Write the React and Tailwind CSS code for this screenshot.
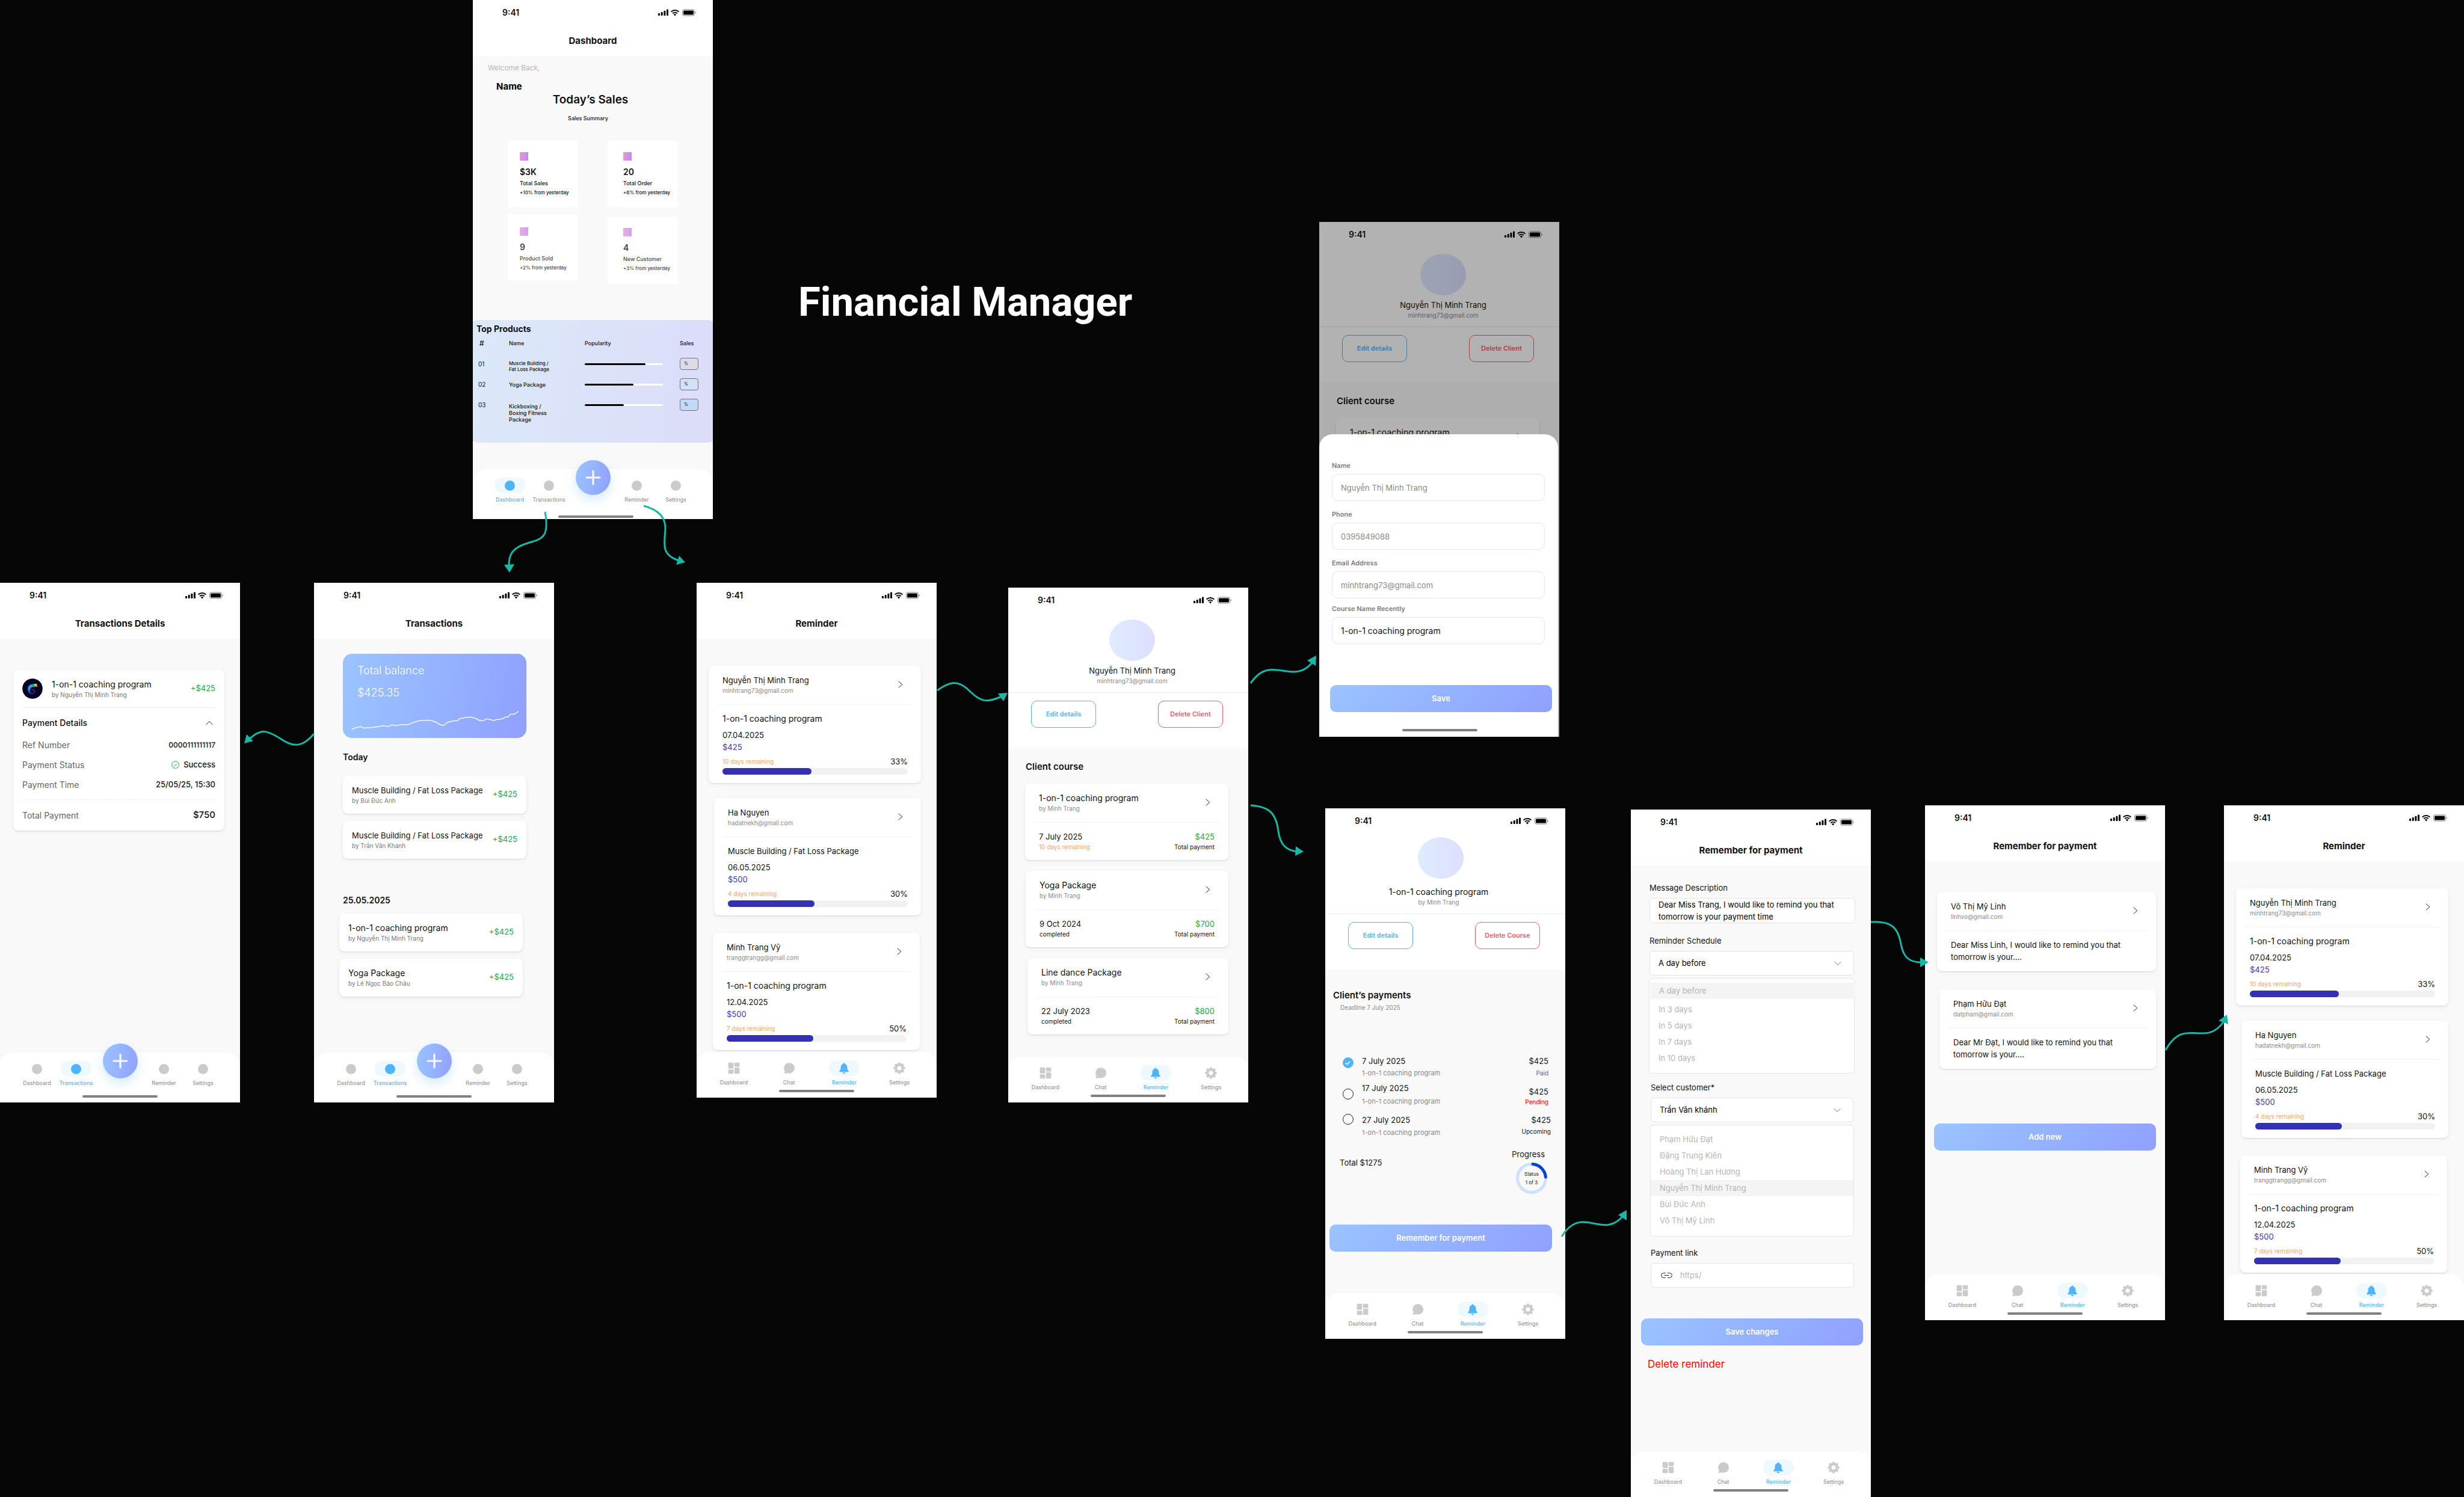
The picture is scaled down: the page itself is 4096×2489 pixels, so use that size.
import React, { useId } from "react";

/* ---------- icons ---------- */

function StatusIcons() {
  return (
    <svg width="64" height="12" viewBox="0 0 64 12" aria-hidden="true">
      <rect x="0" y="7" width="3" height="4" rx="1" />
      <rect x="4.7" y="5" width="3" height="6" rx="1" />
      <rect x="9.4" y="2.7" width="3" height="8.3" rx="1" />
      <rect x="14" y="0.5" width="3" height="10.5" rx="1" />
      <g fill="none" stroke="#000" strokeWidth="2">
        <path d="M21.6 4.6a9.2 9.2 0 0 1 12.8 0" />
        <path d="M24.2 7.3a5.5 5.5 0 0 1 7.6 0" />
      </g>
      <path d="M28 11.4l-2.2-2.3a3.2 3.2 0 0 1 4.4 0z" />
      <rect x="40.5" y="0.9" width="20" height="10.2" rx="3" fill="none" stroke="#000" strokeOpacity=".5" />
      <rect x="42" y="2.4" width="17" height="7.2" rx="1.6" />
      <path d="M61.8 4.2c1.5.6 1.5 3 0 3.6z" fillOpacity=".6" />
    </svg>
  );
}

function GridIcon() {
  return (
    <svg width="20" height="20" viewBox="0 0 20 20" fill="currentColor" aria-hidden="true">
      <rect x="0.6" y="0.7" width="8.8" height="10" rx="1.4" />
      <rect x="0.6" y="12.2" width="8.8" height="7" rx="1.4" />
      <rect x="10.8" y="0.7" width="8.6" height="7" rx="1.4" />
      <rect x="10.8" y="9.1" width="8.6" height="10.1" rx="1.4" />
    </svg>
  );
}

function ChatIcon() {
  return (
    <svg width="20" height="20" viewBox="0 0 20 20" fill="currentColor" aria-hidden="true">
      <path d="M10.3 1.3a8.7 8.7 0 1 1-3.2 16.8c-1.4.7-3.3 1-4.9.7-.7-.1-.9-.7-.5-1.2.6-.8.9-1.9.8-3A8.7 8.7 0 0 1 10.3 1.3z" />
    </svg>
  );
}

function BellIcon() {
  return (
    <svg width="20" height="20" viewBox="0 0 20 20" fill="currentColor" aria-hidden="true">
      <path d="M10 1.6c1 0 1.5.6 1.6 1.3 2.3.7 3.7 2.6 3.8 5l.2 3.3c.1 1 .5 1.7 1.2 2.5.6.6 1 1 1 1.7 0 .5-.4.8-.9.8H3.1c-.5 0-.9-.3-.9-.8 0-.7.4-1.100 1-1.7.7-.8 1.100-1.500 1.2-2.500l.2-3.300c.1-2.400 1.500-4.300 3.800-5 .1-.7.6-1.300 1.800-1.300z" />
      <path d="M7 17.2h6c-.4 1.2-1.6 1.8-3 1.8s-2.6-.6-3-1.8z" />
    </svg>
  );
}

function GearIcon() {
  return (
    <svg width="20" height="20" viewBox="0 0 20 20" fill="currentColor" aria-hidden="true">
      {[0, 45, 90, 135].map((a) => (
        <rect key={a} x="7.7" y="0.4" width="4.6" height="19.2" rx="1.5" transform={`rotate(${a} 10 10)`} />
      ))}
      <circle cx="10" cy="10" r="7.3" />
      <circle cx="10" cy="10" r="3.5" fill="#fff" />
    </svg>
  );
}

function Dot() {
  return <span className="size-[17px] rounded-full bg-current" />;
}

function ChevronRight() {
  return (
    <svg width="8" height="12" viewBox="0 0 8 12" fill="none" stroke="#222" strokeLinecap="round" aria-hidden="true">
      <path d="M1 1 6.8 6 1 11" />
    </svg>
  );
}

function ChevronDown() {
  return (
    <svg width="12" height="8" viewBox="0 0 12 8" fill="none" stroke="#777" strokeLinecap="round" aria-hidden="true">
      <path d="M.8 1.5 6 6.200l5.200-4.700" />
    </svg>
  );
}

function ChevronUp() {
  return (
    <svg width="12" height="8" viewBox="0 0 12 8" fill="none" stroke="#222" strokeLinecap="round" aria-hidden="true">
      <path d="M.8 6.700 6 1.300l5.200 5.400" />
    </svg>
  );
}

function ChameleonLogo() {
  return (
    <svg width="34" height="34" viewBox="0 0 34 34" aria-hidden="true">
      <defs>
        <linearGradient id="chameleon-body" x1="0" y1="0" x2="0" y2="1">
          <stop offset="0" stopColor="#27b7c9" />
          <stop offset=".45" stopColor="#159fe0" />
          <stop offset=".75" stopColor="#1f5fe0" />
          <stop offset="1" stopColor="#5a2fb0" />
        </linearGradient>
      </defs>
      <circle cx="17" cy="17" r="16.8" fill="#070322" />
      <path d="M19.5 10c-5-.6-9.600 2.400-10 7.700-.3 4.500 3 7.800 6.700 7.500 3-.2 4.800-2.300 4.500-4.500-.3-2-2.500-2.800-3.700-1.600-.5.6-.2 1.400.5 1.500" fill="none" stroke="#47209c" strokeWidth="1.5" />
      <path d="M20 9.500c-6-.6-10.800 2.800-10.800 8.200 0 3.700 2.400 6.600 5.600 7.400-2-3.200-2.400-6.800-.4-9.200 1.400-1.700 3.600-2 5.600-2.200z" fill="url(#chameleon-body)" />
      <path d="M15 11.500c1.500-1.600 3.500-2.500 6-2.500l2.500 3.800-3.500 2z" fill="#17a88b" />
      <path d="M19 9.500 24 8.700l.8 5.500-3-1.200z" fill="#f2cf4a" />
      <path d="M21.800 12.300l3 1.900-.5-2.800z" fill="#f08a3c" />
    </svg>
  );
}

/* ---------- shared parts ---------- */

function StatusBar() {
  return (
    <div className="flex h-[42px] shrink-0 items-center justify-between pl-[49px] pr-[27px]">
      <span className="text-[14px] font-semibold leading-[20px]">9:41</span>
      <StatusIcons />
    </div>
  );
}

function TitleHeader({ title }) {
  return (
    <header className="bg-white">
      <StatusBar />
      <h2 className="flex h-[51px] items-center justify-center pt-[2px] text-[15px] font-bold">{title}</h2>
    </header>
  );
}

function HomeBar({ className }) {
  return <div className={`h-1 w-[125px] self-center rounded-full bg-[#808080] ${className}`} />;
}

function NavItem({ icon, label, active, className }) {
  return (
    <button type="button" className={`flex flex-col items-center ${active ? "text-[#4fb5f9]" : "text-[#cbcbcb]"} ${className}`}>
      <span className={`flex h-[26px] w-[51px] items-center justify-center rounded-full ${active ? "bg-[#edf8ff]" : ""}`}>{icon}</span>
      <span className={`mt-[5px] text-[9px] leading-[12px] ${active ? "font-medium" : "text-[#8a8a8a]"}`}>{label}</span>
    </button>
  );
}

function IconNav() {
  return (
    <nav className="relative mt-auto flex h-[76px] shrink-0 flex-col rounded-t-[22px] bg-white pt-[14px]">
      <div className="flex px-4">
        <NavItem className="flex-1" icon={<GridIcon />} label="Dashboard" />
        <NavItem className="flex-1" icon={<ChatIcon />} label="Chat" />
        <NavItem className="flex-1" icon={<BellIcon />} label="Reminder" active />
        <NavItem className="flex-1" icon={<GearIcon />} label="Settings" />
      </div>
      <HomeBar className="mt-[6px]" />
    </nav>
  );
}

function FabNav({ active, barClass }) {
  return (
    <nav className="mt-auto flex h-[83px] shrink-0 flex-col rounded-t-[22px] bg-white pt-[14px]">
      <div className="flex justify-center">
        <NavItem className="w-[65px]" icon={<Dot />} label="Dashboard" active={active === "Dashboard"} />
        <NavItem className="w-[65px]" icon={<Dot />} label="Transactions" active={active === "Transactions"} />
        <div className="flex h-[43px] w-[81px] justify-center">
          <button
            type="button"
            aria-label="Add"
            className="-mt-[29px] flex size-[58px] shrink-0 items-center justify-center rounded-full bg-linear-100 from-[#9ac4ff] to-[#90a0ff] shadow-[0_8px_18px_rgba(79,181,249,0.25)]"
          >
            <svg width="26" height="26" viewBox="0 0 26 26" stroke="#f7f8ff" strokeWidth="3.2" strokeLinecap="round" aria-hidden="true">
              <path d="M13 2v22M2 13h22" />
            </svg>
          </button>
        </div>
        <NavItem className="w-[65px]" icon={<Dot />} label="Reminder" />
        <NavItem className="w-[65px]" icon={<Dot />} label="Settings" />
      </div>
      <HomeBar className={barClass} />
    </nav>
  );
}

function Frame({ className, children }) {
  return (
    <section className={`absolute flex w-[399px] flex-col overflow-hidden bg-[#f9f9f9] text-[#111] ${className}`}>
      {children}
    </section>
  );
}

function Card({ className = "", children }) {
  return (
    <article className={`rounded-lg bg-white pt-[14px] shadow-[0_1px_2px_rgba(0,0,0,0.12),0_3px_10px_rgba(0,0,0,0.04)] ${className}`}>
      {children}
    </article>
  );
}

function CardHead({ title, sub, titleClass = "text-[13px]" }) {
  return (
    <div className="flex items-center justify-between border-b border-[#f2f2f2] pb-4 pl-2 pr-[15px]">
      <div>
        <h3 className={`leading-[20px] ${titleClass}`}>{title}</h3>
        <p className="text-[10px] leading-[14px] text-[#8a8a8a]">{sub}</p>
      </div>
      <button type="button" aria-label={`Open ${title}`}>
        <ChevronRight />
      </button>
    </div>
  );
}

function PrimaryButton({ className, children }) {
  return (
    <button
      type="button"
      className={`h-[45px] rounded-[10px] bg-linear-135 from-[#9ac4ff] to-[#90a0ff] text-[13px] font-semibold text-white ${className}`}
    >
      {children}
    </button>
  );
}

/* ---------- dashboard ---------- */

function Stat({ value, label, note, className }) {
  return (
    <div className={`h-[111px] bg-white ${className}`}>
      <div className="size-[14px] bg-linear-90 from-[#e29ad6] to-[#c488ee]" />
      <p className="mt-[9px] text-[14px] font-semibold leading-[20px]">{value}</p>
      <p className="mt-[2px] text-[9px] font-medium leading-[14px]">{label}</p>
      <p className="mt-[2px] whitespace-nowrap text-[8px] font-medium leading-[12px]">{note}</p>
    </div>
  );
}

const products = [
  { n: "01", name: ["Muscle Building /", "Fat Loss Package"], pop: 78, row: "h-[34px]", text: "pt-1 text-[8px] leading-[10px]", fill: "bg-[#dddbe6]" },
  { n: "02", name: ["Yoga Package"], pop: 62, row: "h-[34px]", text: "pt-[6px] text-[9px] leading-[10px]", fill: "bg-[#d3e1f6]" },
  { n: "03", name: ["Kickboxing /", "Boxing Fitness", "Package"], pop: 50, row: "h-[60px]", text: "pt-[7px] text-[9px] leading-[11px]", fill: "bg-[#c2d9f7]" },
];

function Dashboard() {
  return (
    <Frame className="left-[786px] top-0 h-[863px]">
      <TitleHeader title="Dashboard" />
      <p className="mt-[10px] pl-[25px] text-[12px] font-light leading-[20px] text-[#a8a2a2]">Welcome Back,</p>
      <p className="mt-[11px] pl-[39px] text-[15px] font-bold leading-[20px] text-black">Name</p>
      <h3 className="pr-2 text-center text-[19px] font-semibold leading-[24px]">Today’s Sales</h3>
      <p className="mt-3 pr-4 text-center text-[9px] font-medium leading-[14px]">Sales Summary</p>
      <div className="mt-[30px] flex gap-[50px] pl-[58px]">
        <div className="flex w-[116px] flex-col gap-[11px]">
          <Stat className="pl-5 pt-[19px]" value="$3K" label="Total Sales" note="+10% from yesterday" />
          <Stat className="pl-5 pt-[22px] *:opacity-80" value="9" label="Product Sold" note="+2% from yesterday" />
        </div>
        <div className="flex w-[116px] flex-col gap-4">
          <Stat className="pl-[26px] pt-[19px]" value="20" label="Total Order" note="+8% from yesterday" />
          <Stat className="pl-[26px] pt-[18px] *:opacity-80" value="4" label="New Customer" note="+3% from yesterday" />
        </div>
      </div>
      <section className="-mx-2 mt-[60px] h-[204px] rounded-[18px] bg-linear-100 from-[#dbe9f9] to-[#dcdcf9] px-2 pt-[5px]">
        <h3 className="pl-[6px] text-[14px] font-bold leading-[20px]">Top Products</h3>
        <table className="w-full table-fixed text-left text-[10px]">
          <colgroup>
            <col className="w-[60px]" />
            <col className="w-[126px]" />
            <col className="w-[158px]" />
            <col />
          </colgroup>
          <thead>
            <tr className="h-[38px] align-top text-[9px] leading-[12px] *:pt-2 *:font-medium">
              <th className="pl-[11px] text-[12px]">#</th>
              <th>Name</th>
              <th>Popularity</th>
              <th>Sales</th>
            </tr>
          </thead>
          <tbody>
            {products.map((p) => (
              <tr key={p.n} className={`align-top ${p.row}`}>
                <td className="pl-[9px] leading-[20px]">{p.n}</td>
                <td className={`font-medium ${p.text}`}>
                  {p.name.map((line) => (
                    <div key={line}>{line}</div>
                  ))}
                </td>
                <td>
                  <div className="flex h-5 items-center">
                    <div className="h-[3px] w-[130px] rounded-full bg-white">
                      <div className="h-[3px] rounded-full bg-black" style={{ width: `${p.pop}%` }} />
                    </div>
                  </div>
                </td>
                <td>
                  <div className={`flex h-5 w-[31px] items-center rounded-[4px] border border-[#6f727c] pl-[6px] text-[7px] ${p.fill}`}>%</div>
                </td>
              </tr>
            ))}
          </tbody>
        </table>
      </section>
      <FabNav active="Dashboard" barClass="mt-5 ml-[10px]" />
    </Frame>
  );
}

/* ---------- transactions ---------- */

function TransactionDetails() {
  return (
    <Frame className="left-0 top-[969px] h-[864px]">
      <TitleHeader title="Transactions Details" />
      <Card className="ml-[22px] mr-[26px] mt-[52px] px-[15px]">
        <div className="flex items-center border-b border-[#eee] pb-[14px]">
          <ChameleonLogo />
          <div className="ml-[15px] flex-1">
            <h3 className="text-[14px] leading-[20px]">1-on-1 coaching program</h3>
            <p className="text-[10px] leading-[14px] text-[#777]">by Nguyễn Thị Minh Trang</p>
          </div>
          <span className="text-[13px] text-[#22a447]">+$425</span>
        </div>
        <button type="button" className="mt-[15px] flex w-full items-center justify-between pr-1 text-[14px] font-medium leading-[20px]">
          Payment Details <ChevronUp />
        </button>
        <dl className="mt-[10px] border-b border-dashed border-[#eaeaea] pb-[8px] text-[14px] leading-[33px]">
          <div className="flex justify-between">
            <dt className="text-[#666]">Ref Number</dt>
            <dd className="text-[12px] font-medium">0000111111117</dd>
          </div>
          <div className="flex justify-between">
            <dt className="text-[#666]">Payment Status</dt>
            <dd className="flex items-center gap-[7px] text-[13px] font-medium">
              <svg width="13" height="13" viewBox="0 0 13 13" fill="none" stroke="#22a447" aria-hidden="true">
                <circle cx="6.5" cy="6.5" r="5.8" />
                <path d="M4 6.800 5.800 8.500 9 4.900" />
              </svg>
              Success
            </dd>
          </div>
          <div className="flex justify-between">
            <dt className="text-[#666]">Payment Time</dt>
            <dd className="text-[13px] font-medium">25/05/25, 15:30</dd>
          </div>
        </dl>
        <div className="flex h-[51px] items-center justify-between text-[14px]">
          <span className="text-[#666]">Total Payment</span>
          <span className="text-[15px] font-medium">$750</span>
        </div>
      </Card>
      <FabNav active="Transactions" barClass="mt-[14px]" />
    </Frame>
  );
}

function TransactionCard({ title, by, titleClass = "text-[13px]" }) {
  return (
    <Card className="flex items-center justify-between pb-[15px] pl-[15px] pr-[15px]">
      <div>
        <h3 className={`leading-[20px] ${titleClass}`}>{title}</h3>
        <p className="text-[10px] leading-[14px] text-[#777]">{by}</p>
      </div>
      <span className="text-[13px] text-[#22a447]">+$425</span>
    </Card>
  );
}

function Transactions() {
  return (
    <Frame className="left-[522px] top-[969px] h-[864px]">
      <TitleHeader title="Transactions" />
      <div className="pl-12 pr-[46px] pt-[25px]">
        <div className="h-[140px] rounded-[15px] bg-linear-100 from-[#9ac4ff] to-[#90a0ff] pt-[18px] text-white">
          <p className="pl-6 text-[18px] font-light leading-[20px]">Total balance</p>
          <p className="mt-[17px] pl-6 text-[18px] font-light leading-[20px]">$425.35</p>
          <svg width="278" height="38" viewBox="0 0 278 38" fill="none" stroke="#f4f6ff" strokeWidth="1.5" className="ml-[14px] mt-[14px]" aria-hidden="true">
            <path d="M1 36.5 6 34.5 15 32l6 2.500 14-1 14-2 4.500-1 8 1.500 6-3 6 1.500 12-2 8 .8 8-3.300 12-4 14-.5 6.500.8 7 2.700 7 4 6 1 5-4.500 9-2.500 9-1 3-3 12-2.500 8 0 8 2.500 5 3 7 0 5-3 12 3 5-1.800 9-1 6-3.200 4 0 3-4.500 7 0 7-5" />
          </svg>
        </div>
        <h3 className="mt-[22px] text-[14px] font-semibold leading-[20px]">Today</h3>
        <div className="mt-[21px] flex flex-col gap-3">
          <TransactionCard title="Muscle Building / Fat Loss Package" by="by Bùi Đức Anh" />
          <TransactionCard title="Muscle Building / Fat Loss Package" by="by Trần Văn Khánh" />
        </div>
        <h3 className="mt-[59px] text-[14px] font-semibold leading-[20px]">25.05.2025</h3>
      </div>
      <div className="mt-3 flex flex-col gap-3 pl-[42px] pr-[52px]">
        <TransactionCard titleClass="text-[14px]" title="1-on-1 coaching program" by="by Nguyễn Thị Minh Trang" />
        <TransactionCard titleClass="text-[14px]" title="Yoga Package" by="by Lê Ngọc Bảo Châu" />
      </div>
      <FabNav active="Transactions" barClass="mt-[14px]" />
    </Frame>
  );
}

/* ---------- reminders ---------- */

function ReminderCard({ name, email, course, courseClass = "text-[14px]", date, price, left, percent, className }) {
  return (
    <Card className={`px-[15px] pb-[14px] ${className}`}>
      <CardHead title={name} sub={email} />
      <div className="pl-2 pr-[7px] pt-[13px] text-[13px] leading-[20px]">
        <p className={courseClass}>{course}</p>
        <p className="mt-[7px]">{date}</p>
        <p className="text-[#3f36b5]">{price}</p>
        <div className="mt-[7px] flex h-[14px] items-center justify-between">
          <span className="text-[10px] text-[#f4a56a]">{left}</span>
          <span>{percent}</span>
        </div>
        <div className="mt-1 h-[11px] rounded-full bg-[#f1f1f1]">
          <div className="h-[11px] w-[48%] rounded-full bg-[#3431b5]" />
        </div>
      </div>
    </Card>
  );
}

function Reminder({ className }) {
  return (
    <Frame className={`h-[856px] ${className}`}>
      <TitleHeader title="Reminder" />
      <ReminderCard
        className="ml-5 mr-[26px] mt-[45px]"
        name="Nguyễn Thị Minh Trang"
        email="minhtrang73@gmail.com"
        course="1-on-1 coaching program"
        date="07.04.2025"
        price="$425"
        left="10 days remaining"
        percent="33%"
      />
      <ReminderCard
        className="ml-[29px] mr-[26px] mt-[25px]"
        name="Ha Nguyen"
        email="hadatnekh@gmail.com"
        course="Muscle Building / Fat Loss Package"
        courseClass="text-[13px]"
        date="06.05.2025"
        price="$500"
        left="4 days remaining"
        percent="30%"
      />
      <ReminderCard
        className="ml-[27px] mr-7 mt-[29px]"
        name="Minh Trang Vỹ"
        email="tranggtrangg@gmail.com"
        course="1-on-1 coaching program"
        date="12.04.2025"
        price="$500"
        left="7 days remaining"
        percent="50%"
      />
      <IconNav />
    </Frame>
  );
}

function RememberList() {
  return (
    <Frame className="left-[3200px] top-[1339px] h-[856px]">
      <TitleHeader title="Remember for payment" />
      <Card className="ml-5 mr-[15px] mt-[51px] px-[15px] pb-[14px]">
        <CardHead title="Võ Thị Mỹ Linh" sub="linhvo@gmail.com" />
        <p className="pl-2 pt-[13px] text-[13px] leading-[20px]">
          Dear Miss Linh, I would like to remind you that
          <br />
          tomorrow is your....
        </p>
      </Card>
      <Card className="ml-6 mr-[15px] mt-[30px] px-[15px] pb-[14px]">
        <CardHead title="Phạm Hữu Đạt" sub="datpham@gmail.com" />
        <p className="pl-2 pt-[13px] text-[13px] leading-[20px]">
          Dear Mr Đạt, I would like to remind you that
          <br />
          tomorrow is your....
        </p>
      </Card>
      <PrimaryButton className="mx-[15px] mt-[91px]">Add new</PrimaryButton>
      <IconNav />
    </Frame>
  );
}

/* ---------- client ---------- */

function ProfileHeader({ avatarClass, textClass, titleClass, title, sub, deleteLabel }) {
  return (
    <header className="bg-white pb-[34px]">
      <StatusBar />
      <div className="flex flex-col items-center border-b border-[#ededed] pb-3">
        <div className={`h-[69px] w-[76px] rounded-[50%] bg-linear-90 from-[#dfecff] to-[#dddfff] ${avatarClass}`} />
        <div className={`text-center ${textClass}`}>
          <h3 className={`leading-[20px] ${titleClass}`}>{title}</h3>
          <p className="text-[10px] leading-[14px] text-[#8a8a8a]">{sub}</p>
        </div>
      </div>
      <div className="mt-[13px] flex justify-between pl-[38px] pr-[42px] text-[11px] font-semibold">
        <button type="button" className="h-[45px] w-[108px] rounded-[10px] border border-[#4fb5f9] text-[#4fb5f9]">
          Edit details
        </button>
        <button type="button" className="h-[45px] w-[108px] rounded-[10px] border border-[#fb5966] text-[#fb5966]">
          {deleteLabel}
        </button>
      </div>
    </header>
  );
}

function CourseCard({ title, date, status, statusClass = "", amount, className }) {
  return (
    <Card className={`mr-[33px] px-[15px] pb-[15px] ${className}`}>
      <CardHead title={title} sub="by Minh Trang" titleClass="text-[14px]" />
      <div className="flex justify-between px-2 pt-[13px] text-[10px] leading-[14px]">
        <div>
          <p className="text-[13px] leading-[20px]">{date}</p>
          <p className={statusClass}>{status}</p>
        </div>
        <div className="text-right">
          <p className="text-[13px] leading-[20px] text-[#22a447]">{amount}</p>
          <p>Total payment</p>
        </div>
      </div>
    </Card>
  );
}

function ClientHeader() {
  return (
    <ProfileHeader
      avatarClass="mt-[11px] ml-[13px]"
      textClass="mt-[6px] ml-[13px]"
      titleClass="text-[13px]"
      title="Nguyễn Thị Minh Trang"
      sub="minhtrang73@gmail.com"
      deleteLabel="Delete Client"
    />
  );
}

function ClientCourses() {
  return (
    <>
      <h3 className="mt-[21px] pl-[29px] text-[15px] font-semibold leading-[20px]">Client course</h3>
      <CourseCard
        className="ml-7 mt-[18px]"
        title="1-on-1 coaching program"
        date="7 July 2025"
        status="10 days remaining"
        statusClass="text-[#f4a56a]"
        amount="$425"
      />
    </>
  );
}

function Client() {
  return (
    <Frame className="left-[1676px] top-[977px] h-[856px]">
      <ClientHeader />
      <ClientCourses />
      <CourseCard className="ml-[29px] mt-[18px]" title="Yoga Package" date="9 Oct 2024" status="completed" amount="$700" />
      <CourseCard className="ml-8 mt-[18px]" title="Line dance Package" date="22 July 2023" status="completed" amount="$800" />
      <IconNav />
    </Frame>
  );
}

function EditField({ label, value, className = "", inputClass = "text-[13px] text-[#8a8a8a]" }) {
  const id = useId();
  return (
    <div className={`flex flex-col ${className}`}>
      <label htmlFor={id} className="text-[11px] font-semibold leading-[14px] text-[#7c7c7c]">
        {label}
      </label>
      <input id={id} defaultValue={value} className={`mt-[7px] h-[45px] w-full rounded-[10px] border border-[#e4e4e4] bg-white px-[14px] outline-none ${inputClass}`} />
    </div>
  );
}

function EditClient() {
  return (
    <Frame className="left-[2193px] top-[369px] h-[856px]">
      <ClientHeader />
      <ClientCourses />
      <div className="absolute inset-0 bg-black/30" />
      <form className="absolute bottom-0 left-0 right-[2px] flex h-[503px] flex-col rounded-t-[22px] bg-white pt-[45px]">
        <div className="pl-[21px] pr-[22px]">
          <EditField label="Name" value="Nguyễn Thị Minh Trang" />
          <EditField className="mt-[15px]" label="Phone" value="0395849088" />
          <EditField className="mt-[15px]" label="Email Address" value="minhtrang73@gmail.com" />
          <EditField className="mt-[10px]" label="Course Name Recently" value="1-on-1 coaching program" inputClass="text-[14px] text-[#111]" />
        </div>
        <PrimaryButton className="ml-[18px] mr-[10px] mt-[68px] shrink-0">Save</PrimaryButton>
        <HomeBar className="mt-7 ml-[3px]" />
      </form>
    </Frame>
  );
}

/* ---------- course payments ---------- */

const payments = [
  { date: "7 July 2025", state: "Paid", tone: "text-[#44699f]", done: true, row: "h-[45px]", box: "mt-[4px]", subGap: "mt-[3px]", amount: "pr-7", stateGap: "mt-[3px]" },
  { date: "17 July 2025", state: "Pending", tone: "text-[#f00]", row: "h-[53px]", box: "mt-[11px]", subGap: "mt-[5px]", amount: "pr-7 pt-[6px]", stateGap: "" },
  { date: "27 July 2025", state: "Upcoming", tone: "", row: "h-[38px]", box: "", subGap: "mt-1", amount: "pr-6", stateGap: "mt-[2px]" },
];

function PaymentRow({ p }) {
  const id = useId();
  return (
    <li className={`flex pl-[29px] ${p.row}`}>
      <input
        id={id}
        type="checkbox"
        defaultChecked={p.done}
        className={`size-[18px] shrink-0 appearance-none rounded-full border border-[#222] bg-transparent checked:border-[#4fb5f9] checked:bg-[#4fb5f9] ${p.box}`}
      />
      {p.done && (
        <svg width="9" height="7" viewBox="0 0 9 7" fill="none" stroke="#fff" strokeWidth="1.5" className="pointer-events-none -ml-[14px] mr-[5px] mt-[10px] shrink-0" aria-hidden="true">
          <path d="M.8 3.400 3.200 5.700 8.200.9" />
        </svg>
      )}
      <label htmlFor={id} className="ml-[14px] flex-1">
        <span className="block text-[13px] leading-[20px]">{p.date}</span>
        <span className={`block text-[11px] leading-[14px] text-[#8a8a8a] ${p.subGap}`}>1-on-1 coaching program</span>
      </label>
      <div className={`text-right ${p.amount}`}>
        <p className="text-[13px] leading-[20px]">$425</p>
        <p className={`text-[10px] leading-[14px] ${p.stateGap} ${p.tone}`}>{p.state}</p>
      </div>
    </li>
  );
}

function CoursePayments() {
  return (
    <Frame className="left-[2203px] top-[1344px] h-[882px]">
      <ProfileHeader
        avatarClass="mt-[6px] mr-[15px]"
        textClass="mt-3 mr-[22px]"
        titleClass="text-[14px]"
        title="1-on-1 coaching program"
        sub="by Minh Trang"
        deleteLabel="Delete Course"
      />
      <h3 className="mt-[33px] pl-[13px] text-[15px] font-semibold leading-[20px]">Client’s payments</h3>
      <p className="mt-[3px] pl-[25px] text-[10px] leading-[14px] text-[#8a8a8a]">Deadline 7 July 2025</p>
      <ul className="mt-[72px]">
        {payments.map((p) => (
          <PaymentRow key={p.date} p={p} />
        ))}
      </ul>
      <div className="mt-[19px] flex justify-between pl-6 pr-[30px] text-[13px] leading-[20px]">
        <p className="pt-[14px]">Total $1275</p>
        <div className="flex flex-col items-end">
          <p className="mr-1">Progress</p>
          <div className="mt-1 grid size-[52px] place-items-center">
            <svg width="52" height="52" viewBox="0 0 52 52" fill="none" strokeWidth="5" className="col-start-1 row-start-1" aria-hidden="true">
              <circle cx="26" cy="26" r="23.5" stroke="#cfe0fd" />
              <path d="M28 2.600A23.500 23.500 0 0 1 49.400 24" stroke="#0045d0" strokeLinecap="round" />
            </svg>
            <div className="col-start-1 row-start-1 text-center text-[8px] leading-[14px]">
              <p>Status</p>
              <p>1 of 3</p>
            </div>
          </div>
        </div>
      </div>
      <PrimaryButton className="ml-[7px] mr-[22px] mt-[51px]">Remember for payment</PrimaryButton>
      <IconNav />
    </Frame>
  );
}

/* ---------- reminder form ---------- */

function SelectBox({ label, value, className }) {
  const id = useId();
  return (
    <div className={className}>
      <label htmlFor={id} className="block leading-[20px]">
        {label}
      </label>
      <div className="mt-[7px] flex h-[41px] items-center rounded-md border border-[#e4e4e4] bg-white pr-5">
        <select id={id} defaultValue={value} className="h-full flex-1 appearance-none bg-transparent pl-[14px] text-black outline-none">
          <option>{value}</option>
        </select>
        <ChevronDown />
      </div>
    </div>
  );
}

const customers = ["Phạm Hữu Đạt", "Đặng Trung Kiên", "Hoàng Thị Lan Hương", "Nguyễn Thị Minh Trang", "Bùi Đức Anh", "Võ Thị Mỹ Linh"];

function ReminderForm() {
  return (
    <Frame className="left-[2711px] top-[1346px] h-[1143px]">
      <TitleHeader title="Remember for payment" />
      <form className="flex flex-col text-[13px]">
        <label htmlFor="message" className="ml-[31px] mt-[27px] leading-[20px]">
          Message Description
        </label>
        <textarea
          id="message"
          rows="2"
          className="ml-[31px] mr-[26px] mt-[7px] h-[42px] resize-none overflow-hidden rounded-md border border-[#e4e4e4] bg-white pl-[14px] leading-[20px] text-black outline-none"
          defaultValue={"Dear Miss Trang, I would like to remind you that\ntomorrow is your payment time"}
        />
        <SelectBox className="ml-[31px] mr-7 mt-[19px]" label="Reminder Schedule" value="A day before" />
        <ul className="ml-[30px] mr-[27px] mt-1 rounded-md border border-[#e4e4e4] bg-white pb-[11px] pt-[7px] leading-[27px] text-[#b5b5b5]">
          <li className="-mr-[2px] mb-1 ml-[2px] bg-[#f4f4f4] pl-[14px]">A day before</li>
          <li className="pl-[15px]">In 3 days</li>
          <li className="pl-[15px]">In 5 days</li>
          <li className="pl-[15px]">In 7 days</li>
          <li className="pl-[15px]">In 10 days</li>
        </ul>
        <SelectBox className="ml-[33px] mr-[29px] mt-[13px]" label="Select customer*" value="Trần Văn khánh" />
        <ul className="ml-8 mr-7 mt-1 rounded-md border border-[#e4e4e4] bg-white pb-3 pt-[10px] leading-[27px] text-[#b5b5b5]">
          {customers.map((c) => (
            <li key={c} className={`pl-[15px] ${c === "Nguyễn Thị Minh Trang" ? "bg-[#f4f4f4]" : ""}`}>
              {c}
            </li>
          ))}
        </ul>
        <label htmlFor="link" className="ml-[33px] mt-[17px] leading-[20px]">
          Payment link
        </label>
        <div className="ml-[33px] mr-7 mt-[7px] flex h-[41px] items-center rounded-md border border-[#e4e4e4] bg-white pl-4">
          <svg width="19" height="9" viewBox="0 0 19 9" fill="none" stroke="#222" strokeLinecap="round" aria-hidden="true">
            <path d="M7.500.7H4.400a3.800 3.800 0 0 0 0 7.600h3.100M11.500.7h3.100a3.800 3.800 0 0 1 0 7.600h-3.100M6 4.500h7" />
          </svg>
          <input id="link" placeholder="https/" className="ml-[13px] flex-1 bg-transparent outline-none placeholder:text-[#b5b5b5]" />
        </div>
        <PrimaryButton className="ml-[17px] mr-[13px] mt-[51px]">Save changes</PrimaryButton>
        <button type="button" className="ml-7 mt-[19px] self-start text-[17px] leading-[24px] text-[#f00]">
          Delete reminder
        </button>
      </form>
      <IconNav />
    </Frame>
  );
}

/* ---------- canvas ---------- */

const connectors = [
  { line: "M906 851C914 895 900 896 877 903C851 911 846 922 846 940", head: "847,952 838,939 855,938" },
  { line: "M1070 841C1096 848 1107 862 1106 880C1104 908 1100 922 1128 932", head: "1139,935 1129,924 1124,939" },
  { line: "M522 1220C505 1240 490 1245 466 1228C442 1213 434 1212 415 1228", head: "406,1236 410,1221 421,1232" },
  { line: "M1558 1148C1580 1132 1594 1130 1614 1151C1632 1168 1642 1168 1665 1158", head: "1675,1152 1659,1153 1668,1166" },
  { line: "M2079 1136C2113 1085 2148 1142 2182 1101", head: "2188,1090 2173,1098 2187,1107" },
  { line: "M2079 1339C2108 1341 2121 1350 2125 1382C2128 1403 2136 1413 2156 1416", head: "2167,1416 2154,1407 2153,1423" },
  { line: "M2596 2056C2630 2002 2662 2061 2697 2023", head: "2704,2012 2690,2020 2704,2029" },
  { line: "M3110 1533C3142 1531 3155 1540 3160 1570C3164 1590 3172 1600 3194 1600", head: "3206,1600 3192,1592 3192,1608" },
  { line: "M3600 1746C3632 1688 3665 1744 3697 1698", head: "3702,1687 3688,1697 3704,1703" },
];

export default function App() {
  return (
    <main className="relative min-h-screen w-full overflow-hidden bg-[#060606] font-['Inter',sans-serif]">
      <h1 className="absolute left-[1327px] top-[462px] whitespace-nowrap font-['Roboto',sans-serif] text-[67px] font-bold leading-[80px] text-white">
        Financial Manager
      </h1>
      <Dashboard />
      <TransactionDetails />
      <Transactions />
      <Reminder className="left-[1158px] top-[969px]" />
      <Client />
      <EditClient />
      <CoursePayments />
      <ReminderForm />
      <RememberList />
      <Reminder className="left-[3697px] top-[1339px]" />
      <svg width="4096" height="2489" viewBox="0 0 4096 2489" className="pointer-events-none absolute left-0 top-0" aria-hidden="true">
        {connectors.map((c) => (
          <g key={c.head}>
            <path d={c.line} fill="none" stroke="#16b8a6" strokeWidth="3" />
            <polygon points={c.head} fill="#16b8a6" />
          </g>
        ))}
      </svg>
    </main>
  );
}
